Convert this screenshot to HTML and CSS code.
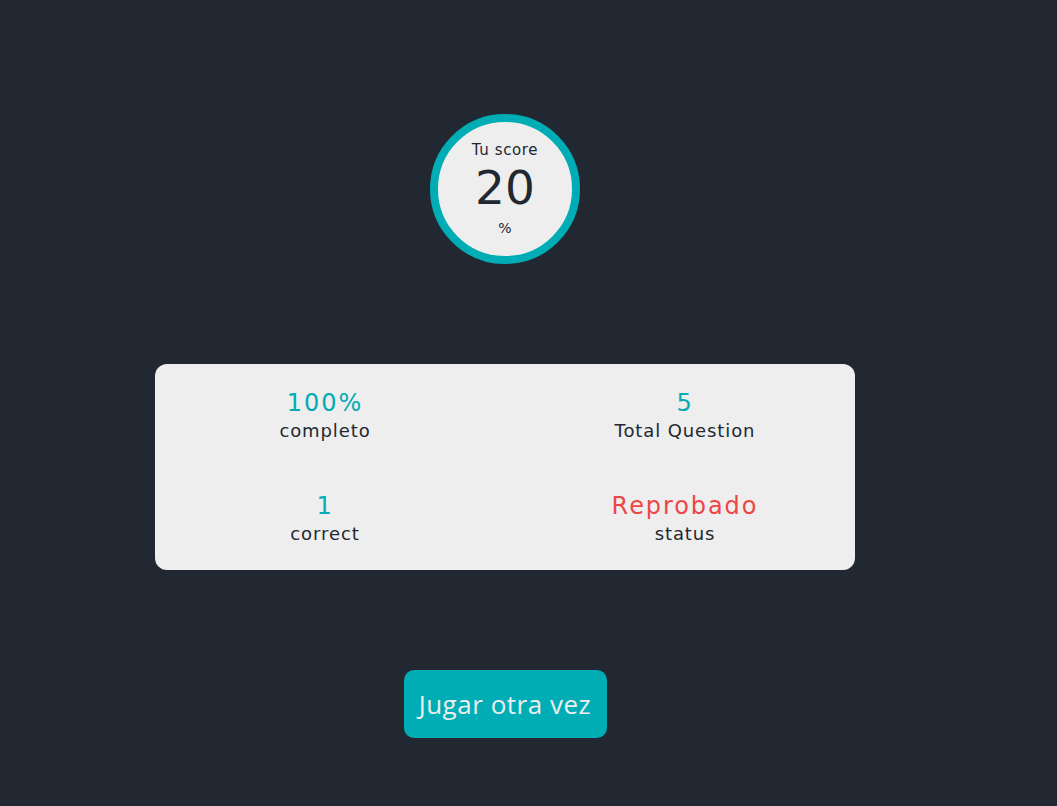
FILE: index.html
```html
<!DOCTYPE html>
<html lang="es">
<head>
<meta charset="utf-8">
<title>Resultado</title>
<link rel="stylesheet" href="styles.css">
</head>
<body>
<main class="result">
  <div class="score-ring">
    <span class="score-label">Tu score</span>
    <span class="score-value">20</span>
    <span class="score-unit">%</span>
  </div>
  <section class="stats">
    <div class="stat">
      <span class="stat-value">100%</span>
      <span class="stat-label">completo</span>
    </div>
    <div class="stat">
      <span class="stat-value">5</span>
      <span class="stat-label">Total Question</span>
    </div>
    <div class="stat">
      <span class="stat-value">1</span>
      <span class="stat-label">correct</span>
    </div>
    <div class="stat">
      <span class="stat-value stat-fail">Reprobado</span>
      <span class="stat-label">status</span>
    </div>
  </section>
  <button class="replay">Jugar otra vez</button>
</main>
</body>
</html>
```

FILE: styles.css
```css
html, body {
  margin: 0;
  padding: 0;
  background: #222831;
  height: 100%;
}
body {
  font-family: "DejaVu Sans", "Open Sans", sans-serif;
  color: #222831;
}
.result {
  width: 1010px;
  padding-top: 114px;
  display: flex;
  flex-direction: column;
  align-items: center;
  gap: 100px;
}
.score-ring {
  width: 134px;
  height: 134px;
  border: 8px solid #00adb5;
  border-radius: 50%;
  background: #eeeeee;
  display: flex;
  flex-direction: column;
  align-items: center;
  justify-content: center;
}
.score-label {
  font-size: 15px;
  line-height: 18px;
  letter-spacing: 0.04em;
  margin-top: 0;
}
.score-value {
  font-size: 47px;
  line-height: 58px;
  font-weight: 400;
}
.score-unit {
  font-size: 14px;
  line-height: 18px;
  margin-top: 2px;
}
.stats {
  width: 700px;
  box-sizing: border-box;
  height: 206px;
  background: #eeeeee;
  border-radius: 12px;
  display: grid;
  grid-template-columns: 340px 340px;
  column-gap: 20px;
  row-gap: 48px;
  padding-top: 24px;
  align-content: start;
}
.stat {
  display: flex;
  flex-direction: column;
  align-items: center;
}
.stat-value {
  font-size: 24px;
  line-height: 30px;
  letter-spacing: 0.08em;
  color: #00adb5;
}
.stat-fail {
  color: #ee4545;
}
.stat-label {
  font-size: 18px;
  line-height: 25px;
  letter-spacing: 0.05em;
}
.replay {
  width: 203px;
  height: 68px;
  border: none;
  border-radius: 10px;
  background: #00adb5;
  color: #eeeeee;
  font-family: "Open Sans", sans-serif;
  font-size: 26px;
  letter-spacing: 0.02em;
  padding: 0;
  cursor: pointer;
}
```
